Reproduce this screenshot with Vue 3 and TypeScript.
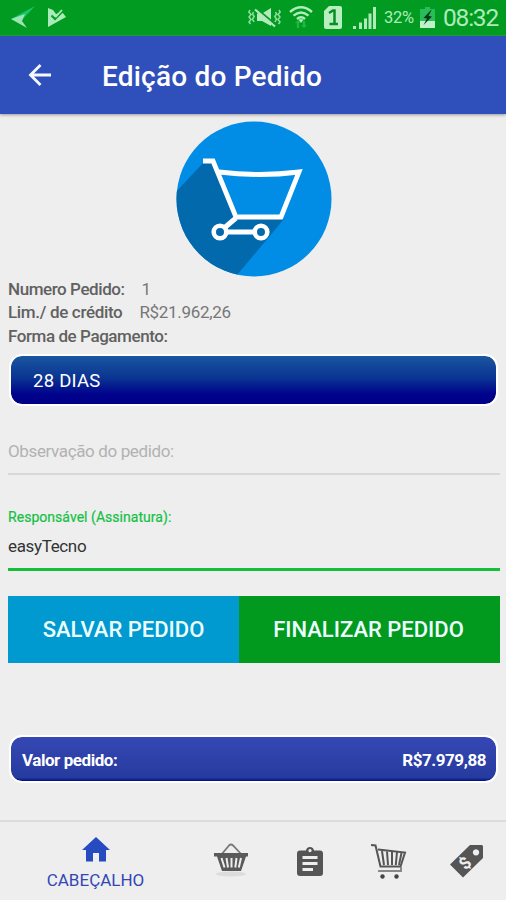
<script setup lang="ts">
interface Info {
  label: string
  value: string
  kind: string
}

const info: Info[] = [
  { label: 'Numero Pedido:', value: '1', kind: 'number' },
  { label: 'Lim./ de crédito', value: 'R$21.962,26', kind: 'credit' },
  { label: 'Forma de Pagamento:', value: '', kind: 'payment' },
]
</script>

<template>
  <div class="screen">
    <header class="status">
      <svg class="plane" width="24" height="23" viewBox="0 0 24 23">
        <path d="M0 13 L24 0 L11 14 Z" fill="#19c66c" />
        <path d="M0 13 L14 8 L11 15 L16 22 Z" fill="#9be5b4" />
      </svg>
      <svg class="play" width="18" height="20" viewBox="0 0 18 20">
        <path d="M0 0 L5 2 L8 6 L14 4 L18 9 L0 19 Z" fill="#a9ebb9" />
        <path d="M3.5 7.5 L7 11 L14.5 3.5" fill="none" stroke="#079b25" stroke-width="2" />
        <path d="M6 6.500 L8 8.500 L14 2" fill="none" stroke="#a9ebb9" stroke-width="1.800" />
      </svg>
      <svg class="mute" width="33" height="21" viewBox="0 0 33 21">
        <g fill="none" stroke="#8fdf9f" stroke-width="1.5">
          <path d="M2 3 L0.8 5 L3 7.5 L1 10 L3 12.5 L1 15 L2.5 17 M5.5 5 L4.5 7 L6.2 9.5 L4.5 12 L6 15" />
          <path d="M31 3 L32.2 5 L30 7.5 L32 10 L30 12.5 L32 15 L30.5 17 M27.5 5 L28.5 7 L26.8 9.5 L28.5 12 L27 15" />
        </g>
        <path d="M9 6.5 H14 L23 1 V19 L14 14 H9 Z" fill="#b2ebbb" />
        <path d="M8 1 L28 18" stroke="#079b25" stroke-width="2" />
        <path d="M7 2.5 L27 19.5" stroke="#b2ebbb" stroke-width="2.2" />
      </svg>
      <svg class="wifi" width="24" height="23" viewBox="0 0 24 23">
        <g fill="none" stroke="#b0edba" stroke-width="2.4">
          <path d="M1 6 Q12 -3.5 23 6" />
          <path d="M4.5 9.7 Q12 3.3 19.5 9.7" />
          <path d="M8 13 Q12 9.6 16 13" />
        </g>
        <path d="M12 17 L9.5 13.8 Q12 12 14.5 13.8 Z" fill="#b0edba" />
        <path d="M9 14 L12 17 H10.2 V22 H7.8 V17 H6 Z M15 22 L12 19 H13.8 V15 H16.2 V19 H18 Z" fill="#1cba45" />
      </svg>
      <svg class="sim" width="18" height="23" viewBox="0 0 18 23">
        <path d="M5 0 H16 Q18 0 18 2 V21 Q18 23 16 23 H2 Q0 23 0 21 V5 Z" fill="#b9efc0" />
        <path d="M5 7 L9 4.5 H10.500 V18 M5.500 18 H14" fill="none" stroke="#078f24" stroke-width="2.5" />
      </svg>
      <svg class="signal" width="23" height="22" viewBox="0 0 23 22">
        <path d="M0 19 H3 V22 H0 Z M6 15.5 H9 V22 H6 Z M11 11.5 H14 V22 H11 Z M15.5 6.5 H18.5 V22 H15.5 Z M20 0 H23 V22 H20 Z" fill="#aeeaba" />
      </svg>
      <span class="percent">32%</span>
      <svg class="battery" width="15" height="21" viewBox="0 0 15 21">
        <path d="M5 0 H10 V2 H15 V15 H0 V2 H5 Z" fill="#27bd58" />
        <path d="M0 14 H15 V21 H0 Z" fill="#c0f1c9" />
        <path d="M11 3 L3.5 11 L7 11.5 L3.5 18 L12 9.5 L8.5 9 L11.5 3 Z" fill="#07371a" />
      </svg>
      <span class="clock">08:32</span>
    </header>

    <div class="appbar">
      <svg class="back" width="24" height="22" viewBox="0 0 24 22">
        <path d="M12.500 1 L2.500 11 L12.500 21 M2.500 11 H23" fill="none" stroke="#f5f8ff" stroke-width="2.800" />
      </svg>
      <h1><span class="title">Edição do Pedido</span></h1>
    </div>

    <main>
      <svg class="hero" width="156" height="156" viewBox="0 0 156 156">
        <defs>
          <clipPath id="disc"><circle cx="78" cy="78" r="77.500" /></clipPath>
        </defs>
        <circle cx="78" cy="78" r="77.500" fill="#018ce5" />
        <path clip-path="url(#disc)" d="M27 42 L-15 87 V160 H56 L108 98 L64 98 L38 40 Z" fill="#0369ad" />
        <path d="M27 40 H37 L60 96 H105 L123 51 Q84 56 43 51" fill="none" stroke="#fff" stroke-width="4.800" />
        <path d="M60 97 L47 108 M50 111 H79" fill="none" stroke="#fff" stroke-width="5" />
        <circle cx="44" cy="111" r="6.300" fill="#0369ad" stroke="#fff" stroke-width="4.600" />
        <circle cx="85" cy="111" r="6.300" fill="#0369ad" stroke="#fff" stroke-width="4.600" />
      </svg>

      <dl class="info">
        <div v-for="row in info" :key="row.kind" :class="['row', row.kind]">
          <dt>{{ row.label }}</dt>
          <dd v-if="row.value">{{ row.value }}</dd>
        </div>
      </dl>

      <div class="select"><span class="days">28 DIAS</span></div>

      <div class="note"><span>Observação do pedido:</span></div>

      <div class="signer">
        <label><span>Responsável (Assinatura):</span></label>
        <div class="name"><span>easyTecno</span></div>
      </div>

      <div class="actions">
        <button class="save"><span>SALVAR PEDIDO</span></button>
        <button class="finish"><span>FINALIZAR PEDIDO</span></button>
      </div>

      <div class="total">
        <span class="total-label">Valor pedido:</span>
        <span class="total-value">R$7.979,88</span>
      </div>
    </main>

    <nav>
      <div class="tab active">
        <svg width="28" height="25" viewBox="0 0 28 25">
          <path d="M14 0 L28 13 H24 V24.500 H17 V16 H11 V24.500 H4 V13 H0 Z" fill="#264bc0" />
        </svg>
        <span class="tab-label">CABEÇALHO</span>
      </div>
      <div class="tab">
        <svg width="36" height="36" viewBox="0 0 36 36">
          <ellipse cx="18" cy="31" rx="15" ry="2.500" fill="#dcdcdc" />
          <path d="M8 12 L16 2.500 Q18 0.500 20 2.500 L29 12" fill="none" stroke="#777" stroke-width="1.800" />
          <path d="M1 10 H35 V13.500 H33 L28 28 H9 L4 13.500 H1 Z" fill="#5a5a5a" />
          <path d="M8.500 15 L11.500 24.500 M13.500 15 L15 24.500 M18.500 15 V24.500 M23.500 15 L22.300 24.500 M28 15 L25.800 24.500" stroke="#eee" stroke-width="2" />
        </svg>
      </div>
      <div class="tab">
        <svg width="26" height="29" viewBox="0 0 26 29">
          <path fill-rule="evenodd" d="M3 3.500 H9 Q9.500 0 13 0 Q16.500 0 17 3.500 H23 Q26 3.500 26 6.500 V26 Q26 29 23 29 H3 Q0 29 0 26 V6.500 Q0 3.500 3 3.500 Z M13 2 A1.600 1.600 0 1 0 13.010 2 Z" fill="#555" />
          <path d="M5.500 10.500 H20.500 M5.500 16.500 H20.500 M5.500 22.500 H16" stroke="#eee" stroke-width="3" />
        </svg>
      </div>
      <div class="tab">
        <svg width="36" height="36" viewBox="0 0 36 36">
          <g fill="none" stroke="#555">
            <path d="M0 2 L4.500 2.500 L9.500 23.500 H29.500 L34 9.500 L7 6.500" stroke-width="2" />
            <path d="M11 8 L13 22 M16 8.500 L17 22 M21 9 V22 M26 9 L24.800 22 M30.500 10 L28 22" stroke-width="2" />
            <path d="M7 28 H30 V24" stroke="#888" stroke-width="2" />
          </g>
          <circle cx="11.500" cy="33.500" r="2.200" fill="#444" />
          <circle cx="25.500" cy="33.500" r="2.200" fill="#444" />
        </svg>
      </div>
      <div class="tab">
        <svg width="34" height="34" viewBox="0 0 34 34">
          <path fill-rule="evenodd" d="M20 1 L32 1 L33 2 V14 L13 33.500 L0 20.500 Z M26 5.200 A3.200 3.200 0 1 0 26.010 5.200 Z" fill="#555" />
          <text class="dollar" x="15" y="25" text-anchor="middle" transform="rotate(-45 15 19)">$</text>
        </svg>
      </div>
    </nav>
  </div>
</template>

<style>
body {
  margin: 0;
  background: #eee;
}
</style>

<style scoped>
* {
  box-sizing: border-box;
}
.screen {
  width: 506px;
  height: 900px;
  overflow: hidden;
  display: flex;
  flex-direction: column;
  background: #eee;
  font-family: Roboto, "Noto Sans", sans-serif;
  white-space: nowrap;
}
svg {
  display: block;
  flex: none;
}
.status {
  height: 36px;
  flex: none;
  display: flex;
  align-items: flex-start;
  background: #009b20;
  color: #aeecb9;
}
.plane { margin: 6px 0 0 11px; }
.play { margin: 8px 0 0 13px; }
.mute { margin: 7px 0 0 182px; }
.wifi { margin: 6px 0 0 8px; }
.sim { margin: 6px 0 0 11px; }
.signal { margin: 7px 0 0 11px; }
.percent {
  width: 30px;
  margin-left: 8px;
  font-size: 16.5px;
  line-height: 36px;
  letter-spacing: -0.3px;
}
.battery { margin: 7px 0 0 6px; }
.clock {
  margin-left: 8px;
  font-size: 24.5px;
  line-height: 36px;
  letter-spacing: -1.2px;
}
.appbar {
  height: 78px;
  flex: none;
  display: flex;
  align-items: center;
  padding-left: 28px;
  background: #2f50bb;
  box-shadow: 0 1px 3px #999;
}
.back { margin-top: -1px; }
h1 {
  margin: 3px 0 0 50px;
  font-size: 28px;
  font-weight: 500;
  line-height: 34px;
  letter-spacing: 0.2px;
  color: #fff;
}
main {
  flex: 1;
  display: flex;
  flex-direction: column;
  padding: 7px 6px 0 8px;
}
.hero { margin-left: 167.500px; }
.info {
  margin: 0;
  color: #666;
}
.row {
  height: 23.300px;
  display: flex;
  font-size: 17px;
  line-height: 24px;
}
dt {
  font-weight: 500;
  letter-spacing: -0.430px;
  color: #616161;
}
.credit dt { letter-spacing: -0.330px; }
dd {
  margin: 0 0 0 17px;
  letter-spacing: -0.300px;
  color: #777;
}
.select,
.total {
  display: flex;
  align-items: center;
  width: 489px;
  margin-left: 1px;
  border: 2px solid #fff;
  border-radius: 13px;
  color: #fff;
}
.select {
  height: 52px;
  margin-top: 7px;
  padding: 2px 0 0 22px;
  background: linear-gradient(#1a56a0, #0a3592 45%, #00028c 80%, #000088) padding-box;
  font-size: 18.500px;
  letter-spacing: 0.250px;
}
.note {
  width: 492px;
  height: 69px;
  padding-top: 33px;
  border-bottom: 2px solid #d8d8d8;
  font-size: 17px;
  line-height: 24px;
  letter-spacing: -0.370px;
  color: #b2b2b2;
}
.signer {
  width: 492px;
  height: 96px;
  padding-top: 32px;
  border-bottom: 3px solid #16bf39;
}
label {
  display: block;
  font-size: 14px;
  line-height: 20px;
  letter-spacing: 0.040px;
  color: #14c144;
  -webkit-text-stroke: 0.200px #14c144;
}
.name {
  margin-top: 7px;
  font-size: 17px;
  line-height: 24px;
  letter-spacing: -0.350px;
  color: #333;
}
.actions {
  width: 492px;
  height: 67px;
  margin-top: 25px;
  display: flex;
}
button {
  border: 0;
  padding: 2px 0 0;
  font: 500 22px/30px Roboto, sans-serif;
  color: #edffff;
  text-align: center;
}
.save { width: 231px; background: #0099d0; }
.finish { flex: 1; padding-right: 2px; background: #029a1e; }
.total {
  height: 48px;
  margin-top: 72px;
  padding: 2px 10px 0 11px;
  justify-content: space-between;
  background: linear-gradient(#3647b3, #263b9f 92%, #001280) padding-box;
  font-size: 17px;
  font-weight: 700;
  letter-spacing: -0.450px;
}
nav {
  height: 80px;
  flex: none;
  display: grid;
  grid-template-columns: 191px 79px 79px 79px 78px;
  border-top: 2px solid #dcdcdc;
}
.tab {
  display: flex;
  flex-direction: column;
  align-items: center;
  justify-content: center;
}
.active {
  justify-content: flex-start;
  padding-top: 15px;
  color: #3446b4;
}
.tab-label {
  margin-top: 6px;
  font-size: 17px;
  line-height: 24px;
}
.dollar {
  font: 700 17px Roboto, sans-serif;
  fill: #eee;
}
</style>
